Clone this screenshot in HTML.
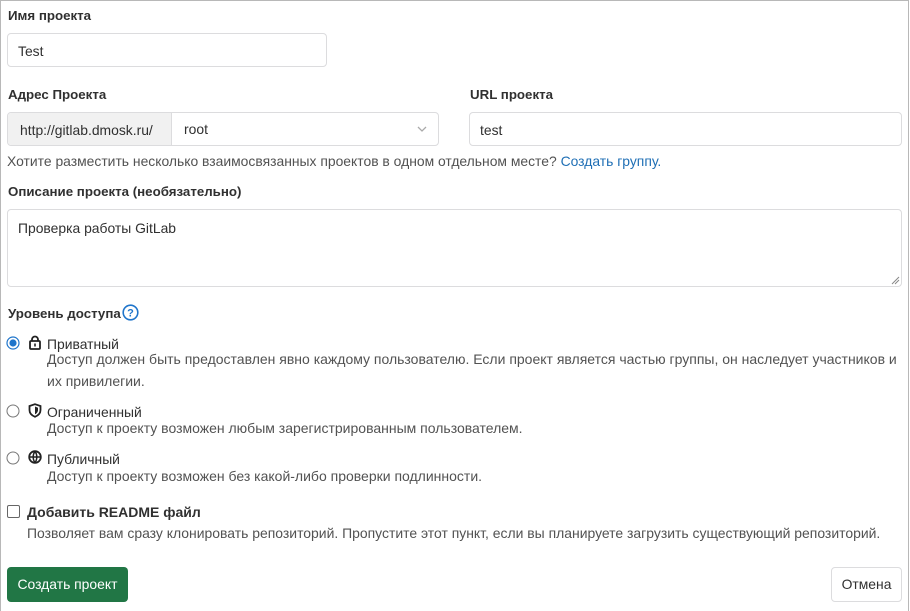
<!DOCTYPE html>
<html><head><meta charset="utf-8"><style>
*{box-sizing:border-box;margin:0;padding:0}
body{width:910px;height:611px;background:#fff;font-family:"Liberation Sans",sans-serif;font-size:13.9px;color:#303030;position:relative;overflow:hidden}
.frame{position:absolute;left:0;top:0;width:909px;height:611px;border:1px solid #b8b8b8;border-bottom:none}
.a{position:absolute;white-space:nowrap}
.b{font-weight:bold;color:#303030;font-size:13.3px}
.in{position:absolute;border:1px solid #dcdcde;border-radius:4px;background:#fff}
.g{color:#525252}
.desc{color:#525252;font-size:14px}
</style></head><body>
<div class="frame"></div>
<div class="a b" style="left:8px;top:8px">Имя проекта</div>
<div class="in" style="left:7px;top:33px;width:320px;height:34px"></div>
<div class="a" style="left:18px;top:43px">Test</div>

<div class="a b" style="left:8px;top:87px">Адрес Проекта</div>
<div class="a b" style="left:470px;top:87px">URL проекта</div>
<div class="in" style="left:7px;top:112px;width:432px;height:34px"></div>
<div style="position:absolute;left:8px;top:113px;width:164px;height:32px;background:#f1f1f1;border-right:1px solid #dcdcde;border-radius:3px 0 0 3px"></div>
<div class="a" style="left:20px;top:122px">http://gitlab.dmosk.ru/</div>
<div class="a" style="left:184px;top:121px">root</div>
<svg class="a" style="left:417px;top:125px" width="10" height="8" viewBox="0 0 10 8"><path d="M1 2l4 4 4-4" fill="none" stroke="#aaa" stroke-width="1.3"/></svg>
<div class="in" style="left:469px;top:112px;width:433px;height:34px"></div>
<div class="a" style="left:480px;top:122px">test</div>
<div class="a g" style="left:7px;top:153px">Хотите разместить несколько взаимосвязанных проектов в одном отдельном месте? <span style="color:#1f6fb5">Создать группу.</span></div>

<div class="a b" style="left:8px;top:184px">Описание проекта (необязательно)</div>
<div class="in" style="left:7px;top:209px;width:895px;height:78px"></div>
<div class="a" style="left:18px;top:220px">Проверка работы GitLab</div>
<svg class="a" style="left:891px;top:276px" width="9" height="9"><path d="M8 1L1 8M8 4L4 8" stroke="#888" stroke-width="1"/></svg>

<div class="a b" style="left:8px;top:306px">Уровень доступа</div>
<svg class="a" style="left:122px;top:304px" width="17" height="17" viewBox="0 0 17 17"><circle cx="8.5" cy="8.5" r="7.3" fill="none" stroke="#1f75cb" stroke-width="1.6"/><text x="8.5" y="12.5" text-anchor="middle" font-family="Liberation Sans" font-size="11" font-weight="bold" fill="#1f75cb">?</text></svg>

<svg class="a" style="left:6px;top:336px" width="14" height="14"><circle cx="7" cy="7" r="6" fill="#fff" stroke="#1f75cb" stroke-width="1.2"/><circle cx="7" cy="7" r="3.6" fill="#1f75cb"/></svg>
<svg class="a" style="left:28px;top:335px" width="14" height="15" viewBox="0 0 14 15"><path d="M4 6V4.5a3 3 0 0 1 6 0V6" fill="none" stroke="#222" stroke-width="1.8"/><rect x="2" y="6" width="10" height="8" rx="1" fill="none" stroke="#222" stroke-width="1.8"/><rect x="6.2" y="8.5" width="1.6" height="3" fill="#222"/></svg>
<div class="a" style="left:47px;top:336px">Приватный</div>
<div class="a desc" style="left:47px;top:351px">Доступ должен быть предоставлен явно каждому пользователю. Если проект является частью группы, он наследует участников и</div>
<div class="a desc" style="left:47px;top:373px">их привилегии.</div>

<svg class="a" style="left:6px;top:404px" width="14" height="14"><circle cx="7" cy="7" r="6" fill="#fff" stroke="#777" stroke-width="1"/></svg>
<svg class="a" style="left:28px;top:403px" width="14" height="15" viewBox="0 0 14 15"><path d="M7 1.2L12.5 3v4c0 3.3-2.5 5.6-5.5 6.8C4 12.6 1.5 10.3 1.5 7V3z" fill="none" stroke="#222" stroke-width="1.8"/><path d="M7 3.5L10 4.7V7c0 2-1.4 3.5-3 4.3z" fill="#222"/></svg>
<div class="a" style="left:47px;top:404px">Ограниченный</div>
<div class="a desc" style="left:47px;top:420px">Доступ к проекту возможен любым зарегистрированным пользователем.</div>

<svg class="a" style="left:6px;top:451px" width="14" height="14"><circle cx="7" cy="7" r="6" fill="#fff" stroke="#777" stroke-width="1"/></svg>
<svg class="a" style="left:28px;top:450px" width="14" height="14" viewBox="0 0 14 14"><circle cx="7" cy="7" r="5.8" fill="none" stroke="#222" stroke-width="1.8"/><path d="M1.5 7h11M7 1.5c-2.4 3-2.4 8 0 11M7 1.5c2.4 3 2.4 8 0 11" fill="none" stroke="#222" stroke-width="1.5"/></svg>
<div class="a" style="left:47px;top:451px">Публичный</div>
<div class="a desc" style="left:47px;top:468px">Доступ к проекту возможен без какой-либо проверки подлинности.</div>

<div style="position:absolute;left:7px;top:505px;width:13px;height:13px;border:1px solid #666;border-radius:2px;background:#fff"></div>
<div class="a b" style="left:27px;top:504px;font-size:14px">Добавить README файл</div>
<div class="a desc" style="left:27px;top:525px;font-size:13.95px">Позволяет вам сразу клонировать репозиторий. Пропустите этот пункт, если вы планируете загрузить существующий репозиторий.</div>

<div style="position:absolute;left:7px;top:567px;width:121px;height:35px;background:#217645;border-radius:4px;color:#fff;line-height:35px;text-align:center">Создать проект</div>
<div style="position:absolute;left:831px;top:567px;width:71px;height:35px;border:1px solid #dcdcde;border-radius:4px;background:#fff;color:#303030;line-height:33px;text-align:center">Отмена</div>
</body></html>
